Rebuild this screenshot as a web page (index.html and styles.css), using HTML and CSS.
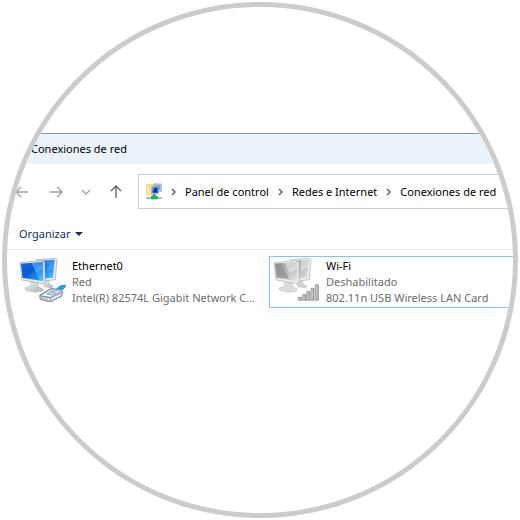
FILE: index.html
```html
<!DOCTYPE html>
<html lang="es">
<head>
    <meta charset="UTF-8">
    <meta name="viewport" content="width=device-width, initial-scale=1.0">
    <title>Conexiones de red</title>
    <link rel="stylesheet" href="styles.css">
</head>
<body>

    <div class="lens">
        <div class="window">
            <header class="title-bar">Conexiones de red</header>

            <div class="nav-bar">
                <div class="nav-buttons">
                    <button type="button" class="nav-btn back muted" aria-label="Atrás">
                        <svg width="14" height="12" viewBox="0 0 14 12"><path d="M13 6H1M6 1L1 6l5 5"/></svg>
                    </button>
                    <button type="button" class="nav-btn muted" aria-label="Adelante">
                        <svg width="14" height="12" viewBox="0 0 14 12"><path d="M1 6h12M8 1l5 5-5 5"/></svg>
                    </button>
                    <button type="button" class="nav-btn muted" aria-label="Ubicaciones recientes">
                        <svg width="10" height="12" viewBox="0 0 10 12"><path d="M1 4l4 4 4-4"/></svg>
                    </button>
                    <button type="button" class="nav-btn" aria-label="Subir">
                        <svg width="12" height="14" viewBox="0 0 12 14"><path d="M6 13V1M1 6l5-5 5 5"/></svg>
                    </button>
                </div>

                <nav class="address">
                    <svg class="folder-icon" width="16" height="17" viewBox="0 0 48 51">
                        <path d="M1 4h20l3-3h6v36H1z" fill="#f0c65a"/>
                        <path d="M3 7h20v28H3z" fill="#ffe394"/>
                        <path d="M26 3h20v22H26z" fill="#d5dce4" stroke="#8495a8" stroke-width="2"/>
                        <path d="M29 6h14v15H29z" fill="#6ba4ea"/>
                        <path d="M15 11l21-2 2 22-21 2z" fill="#e9eef4" stroke="#8293a7" stroke-width="2"/>
                        <path d="M18 14l16-2 2 17-16 1z" fill="#0b34a8"/>
                        <path d="M18 14l8-1-3 9-4 3z" fill="#5a9cf0"/>
                        <path d="M1 42h46v6H1z" fill="#a3bdb6"/>
                        <path d="M20 34h9v5h6v10H15V39h5z" fill="#12b060"/>
                    </svg>
                    <svg class="sep" width="5" height="8" viewBox="0 0 5 8"><path d="M1 1l3 3-3 3"/></svg>
                    <a href="#">Panel de control</a>
                    <svg class="sep" width="5" height="8" viewBox="0 0 5 8"><path d="M1 1l3 3-3 3"/></svg>
                    <a href="#">Redes e Internet</a>
                    <svg class="sep" width="5" height="8" viewBox="0 0 5 8"><path d="M1 1l3 3-3 3"/></svg>
                    <a href="#">Conexiones de red</a>
                </nav>
            </div>

            <div class="toolbar">
                <button type="button" class="organize">Organizar
                    <svg width="8" height="4" viewBox="0 0 8 4"><path d="M0 0h8L4 4z"/></svg>
                </button>
            </div>

            <ul class="connections">
                <li class="connection">
                    <svg width="48" height="44" viewBox="12 12 144 132">
                        <defs>
                            <linearGradient id="blue" x1="0" y1="0" x2="1" y2="1">
                                <stop offset="0" stop-color="#1d86ea"/>
                                <stop offset="0.45" stop-color="#0c62dc"/>
                                <stop offset="0.6" stop-color="#1f93f5"/>
                                <stop offset="1" stop-color="#62c8ff"/>
                            </linearGradient>
                            <linearGradient id="metal" x1="0" y1="0" x2="1" y2="1">
                                <stop offset="0" stop-color="#f4f5f6"/>
                                <stop offset="1" stop-color="#a9afb5"/>
                            </linearGradient>
                        </defs>
                        <path d="M84 75l20 2 4 14 12 4-8 8-24-4z" fill="url(#metal)"/>
                        <path d="M67 17l57-4 5 3-5 61-34 4-23-5z" fill="#e6eaee" stroke="#9da6af" stroke-width="2"/>
                        <path d="M71 21l51-4-5 54-46 4z" fill="url(#blue)"/>
                        <path d="M98 19l24-2-2 22-22 14z" fill="#74c1ff" opacity="0.4"/>
                        <path d="M50 82l22 3 2 14 13 5-1 7-22 4-29-6-2-7 17-6z" fill="url(#metal)" stroke="#b9bfc5" stroke-width="2"/>
                        <path d="M18 26l66-6 9 4v58l-5 7-64-11z" fill="#e9ecef" stroke="#969fa8" stroke-width="2"/>
                        <path d="M21 29l67-5v58l-62-10z" fill="url(#blue)"/>
                        <path d="M21 29l31-3 24 52-50-8z" fill="#0848bf" opacity="0.4"/>
                        <path d="M53 27l35-3v20L66 56z" fill="#75bdff" opacity="0.45"/>
                        <path d="M124 108l14-12 17-3-3 8-17 14z" fill="#22a7ec" stroke="#0c78bd" stroke-width="2"/>
                        <path d="M77 124l33-20 28 2 8 7-3 13-35 18-29-8z" fill="#dce8f3" stroke="#63779a" stroke-width="3"/>
                        <path d="M79 125l30-18 31 5-30 18z" fill="#f5faff" stroke="#7c91b0" stroke-width="2"/>
                        <path d="M98 120l14-8 15 3-14 8z" fill="#bcd0e4" stroke="#6c83a3" stroke-width="2"/>
                        <path d="M109 131v10M143 116l-34 15-30-5" fill="none" stroke="#5c7194" stroke-width="2"/>
                        <path d="M84 129v6M89 130v6M94 131v6M99 132v6" stroke="#b98c27" stroke-width="2"/>
                    </svg>
                    <div class="details">
                        <span class="name">Ethernet0</span>
                        <span>Red</span>
                        <span>Intel(R) 82574L Gigabit Network C...</span>
                    </div>
                </li>
                <li class="connection selected">
                    <svg width="48" height="44" viewBox="12 12 144 132">
                        <defs>
                            <linearGradient id="gray" x1="0" y1="0" x2="1" y2="1">
                                <stop offset="0" stop-color="#989898"/>
                                <stop offset="0.5" stop-color="#b8b8b8"/>
                                <stop offset="1" stop-color="#e8e8e8"/>
                            </linearGradient>
                            <linearGradient id="bars" x1="0" y1="0" x2="1" y2="0">
                                <stop offset="0" stop-color="#dcdcdc"/>
                                <stop offset="1" stop-color="#a6a6a6"/>
                            </linearGradient>
                        </defs>
                        <path d="M84 75l20 2 4 14 12 4-8 8-24-4z" fill="#d2d2d2"/>
                        <path d="M67 17l57-4 5 3-5 61-34 4-23-5z" fill="#ececec" stroke="#b4b4b4" stroke-width="2"/>
                        <path d="M71 21l51-4-5 54-46 4z" fill="url(#gray)"/>
                        <path d="M98 19l24-2-2 22-22 14z" fill="#fff" opacity="0.4"/>
                        <path d="M50 82l22 3 2 14 13 5-1 7-22 4-29-6-2-7 17-6z" fill="#dcdcdc" stroke="#c4c4c4" stroke-width="2"/>
                        <path d="M18 26l66-6 9 4v58l-5 7-64-11z" fill="#eee" stroke="#b0b0b0" stroke-width="2"/>
                        <path d="M21 29l67-5v58l-62-10z" fill="url(#gray)"/>
                        <path d="M21 29l17-1 26 46-38-4z" fill="#808080" opacity="0.5"/>
                        <path d="M50 27l38-3v20L64 58z" fill="#fff" opacity="0.4"/>
                        <g fill="url(#bars)" stroke="#7c7c7c" stroke-width="2">
                            <path d="M91 130h9v9h-9z"/>
                            <path d="M104 122h9v17h-9z"/>
                            <path d="M116 113h9v26h-9z"/>
                            <path d="M129 103h9v36h-9z"/>
                            <path d="M142 92h9v47h-9z"/>
                        </g>
                    </svg>
                    <div class="details">
                        <span class="name">Wi-Fi</span>
                        <span>Deshabilitado</span>
                        <span>802.11n USB Wireless LAN Card</span>
                    </div>
                </li>
            </ul>
        </div>
    </div>

</body>
</html>
```
FILE: styles.css
```css
* {
    box-sizing: border-box;
}

body {
    margin: 0;
    padding: 2px;
    background-color: #fff;
    color: #000;
    font-family: 'Noto Sans', sans-serif;
    font-size: 11px;
    line-height: 16px;
}

.lens {
    aspect-ratio: 1;
    border: 5px solid #ccc;
    border-radius: 50%;
    overflow: hidden;
}

.window {
    padding-top: 126px;
    white-space: nowrap;
}

.title-bar {
    padding: 7px 24px;
    border-top: 1px solid #7f98a9;
    background-color: #ebf3fa;
}

.nav-bar {
    display: flex;
    align-items: center;
    padding-top: 10px;
}

.nav-buttons {
    display: flex;
    flex: none;
    width: 131px;
}

.nav-btn {
    display: flex;
    align-items: center;
    justify-content: center;
    width: 30px;
    height: 32px;
    padding: 0;
    border: none;
    background: none;
}

.nav-btn.back {
    margin-right: 4px;
}

.nav-btn path {
    fill: none;
    stroke: #606060;
    stroke-width: 1.3;
}

.nav-btn.muted path {
    stroke: #a0a0a0;
}

.address {
    display: flex;
    flex: 1;
    align-items: center;
    gap: 9px;
    height: 35px;
    padding-left: 7px;
    border: 1px solid #ccc;
    border-right: none;
}

.address a {
    color: #000;
    text-decoration: none;
}

.folder-icon,
.sep {
    flex: none;
}

.sep path {
    fill: none;
    stroke: #5c5c5c;
    stroke-width: 1.4;
}

.toolbar {
    height: 41px;
    padding: 17px 12px 0;
    border-bottom: 1px solid #e5e5e5;
}

.organize {
    display: flex;
    align-items: center;
    gap: 5px;
    padding: 0;
    border: none;
    background: none;
    color: #0e2f5e;
    font: inherit;
}

.organize svg {
    fill: #0e2f5e;
}

.connections {
    display: grid;
    grid-template-columns: 254px 254px;
    margin: 6px 0 0;
    padding: 0 0 0 8px;
    list-style: none;
}

.connection {
    display: flex;
    gap: 6px;
    padding: 1px 2px;
    border: 1px solid transparent;
}

.connection.selected {
    border-color: #7cc5f5;
}

.connection svg {
    flex: none;
}

.details {
    display: flex;
    flex-direction: column;
    color: #6d6d6d;
}

.name {
    color: #000;
}
```
